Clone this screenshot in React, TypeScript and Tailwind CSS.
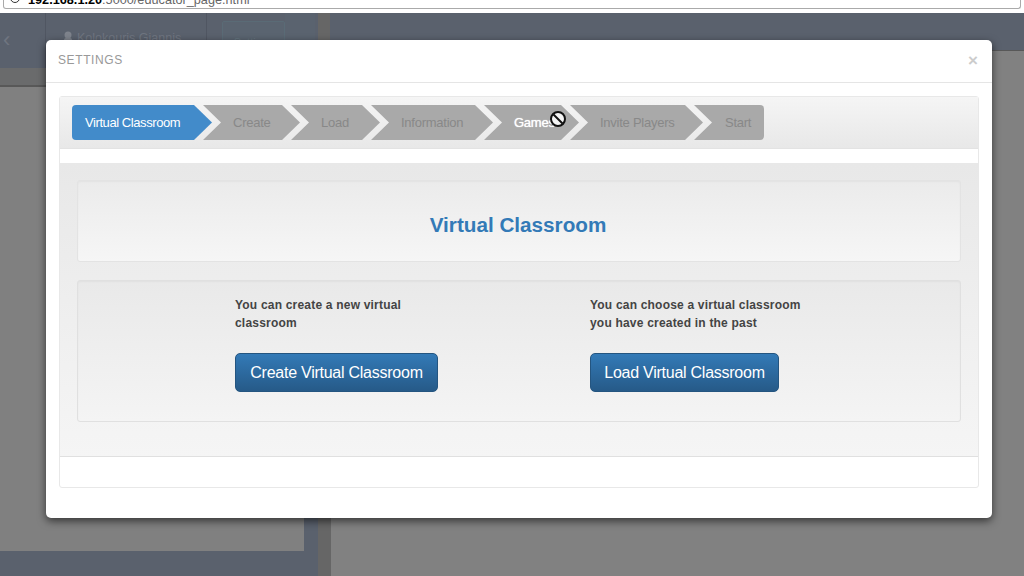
const STEP_BASE = "flex h-[35px] shrink-0 items-center text-[13px] tracking-[-0.25px]";
const MID = "[clip-path:polygon(0_0,calc(100%-18px)_0,100%_50%,calc(100%-18px)_100%,0_100%,18px_50%)]";

function Cursor() {
  return (
    <svg className="absolute left-[549px] top-[110px] z-20" width="18" height="18" viewBox="0 0 18 18">
      <circle cx="9" cy="9" r="7" fill="#f4f4f4" stroke="#111" strokeWidth="2" />
      <path d="M4.5 4.5 13.5 13.5" stroke="#111" strokeWidth="2" />
    </svg>
  );
}

export default function App() {
  const steps = [
    { label: "Create", w: "w-[97px]", t: "text-[#888888] pl-[30px]" },
    { label: "Load", w: "w-[89px]", t: "text-[#888888] pl-[30px]" },
    { label: "Information", w: "w-[122px]", t: "text-[#888888] pl-[30px]" },
    { label: "Games", w: "w-[95px]", t: "text-white pl-[30px] [text-shadow:0_0_1px_#ffffff]" },
    { label: "Invite Players", w: "w-[133px]", t: "text-[#888888] pl-[30px]" },
  ];
  return (
    <div className="relative flex h-[576px] w-[1024px] flex-col overflow-hidden bg-[#808080] font-['Liberation_Sans',Arial,sans-serif]">
      {/* browser address bar */}
      <div className="h-[13px] shrink-0 bg-white">
        <div className="mx-[3px] flex h-[9px] items-start overflow-hidden rounded-b-[3px] border-x border-b border-[#aaaaaa]">
          <div className="ml-[6px] mt-[-7px] h-[10px] w-[10px] shrink-0 rounded-full border border-[#333]" />
          <div className="ml-[8px] whitespace-nowrap text-[12.7px] leading-[0px] text-[#666]">
            <span className="font-bold text-black">192.168.1.20</span>:5000/educator_page.html
          </div>
        </div>
      </div>
      {/* app top bar */}
      <div className="flex h-[37px] shrink-0 bg-[#5a616d] text-[#6f7580]">
        <div className="w-[46px] shrink-0 border-r border-[#505662] pl-[3px] pt-[14px] text-[22px] leading-[26px]">‹</div>
        <div className="flex w-[161px] shrink-0 items-start border-r border-[#505662] pl-[17px] pt-[18px]">
          <svg width="10" height="14" viewBox="0 0 10 14" className="shrink-0"><circle cx="5" cy="4" r="3.5" fill="#7e838c" /><rect x="1" y="7" width="8" height="7" rx="2" fill="#7e838c" /></svg>
          <span className="ml-[4px] whitespace-nowrap text-[12.5px] leading-[14px]">Kolokouris Giannis</span>
        </div>
        <div className="ml-[15px] mt-[8px] h-[29px] w-[63px] shrink-0 rounded-[2px] border border-[#5a6b76] bg-[#5a6470] pt-[14px] text-center text-[11px] leading-[12px] text-[#64757f]">Settings</div>
        <div className="h-full w-[30px] shrink-0 bg-[#5a636f]" />
        <div className="ml-[3px] h-full w-[12px] shrink-0 bg-[#666666]" />
      </div>
      <div className="flex min-h-0 flex-1">
        <div className="flex w-[318px] shrink-0 flex-col bg-[#5a616d]">
          <div className="h-[18px] w-[46px] shrink-0 border-r border-[#505662]" />
          <div className="h-[19px] shrink-0 border-b-2 border-[#585858] bg-[#6a6b6c]" />
          <div className="h-[464px] w-[304px] shrink-0 bg-[#808080]" />
        </div>
        <div className="w-[13px] shrink-0 bg-[#666666]" />
        <div className="flex-1 border-t border-[#585858] bg-[#818181]" />
      </div>

      {/* dialog */}
      <div className="absolute left-[46px] top-[40px] z-10 flex h-[478px] w-[946px] flex-col rounded-[5px] bg-white shadow-[0_3px_9px_rgba(0,0,0,0.6)]">
        <div className="flex h-[43px] shrink-0 items-center justify-between border-b border-[#e5e5e5] pb-[2px] pl-[12px] pr-[14px]">
          <span className="text-[12px] tracking-[0.6px] text-[#999999]">SETTINGS</span>
          <span className="text-[17px] font-bold leading-none text-[#cccccc]">×</span>
        </div>
        <div className="mx-[13px] mt-[13px] flex h-[392px] flex-col rounded-[3px] border border-[#e8e8e8]">
          <div className="flex h-[52px] shrink-0 items-center border-b border-[#e3e3e3] bg-gradient-to-b from-[#f5f5f5] to-[#e8e8e8] pl-[12px]">
            <div className={`${STEP_BASE} w-[140px] rounded-l-[4px] bg-[#428bca] pl-[13px] text-white [clip-path:polygon(0_0,calc(100%-18px)_0,100%_50%,calc(100%-18px)_100%,0_100%)]`}>
              <span className="tracking-[-0.42px]">Virtual Classroom</span>
            </div>
            {steps.map((s) => (
              <div key={s.label} className={`${STEP_BASE} ${MID} ${s.w} ${s.t} -ml-[9px] bg-[#a9a9a9]`}>
                <span className="whitespace-nowrap">{s.label}</span>
              </div>
            ))}
            <div className={`${STEP_BASE} -ml-[9px] w-[70px] rounded-r-[4px] bg-[#a9a9a9] pl-[31px] text-[#888888] [clip-path:polygon(0_0,100%_0,100%_100%,0_100%,18px_50%)]`}>
              Start
            </div>
          </div>
          <div className="h-[14px] shrink-0" />
          <div className="flex h-[294px] shrink-0 flex-col gap-[18px] border-b border-[#e0e0e0] bg-gradient-to-b from-[#e8e8e8] to-[#f5f5f5] px-[17px] pt-[17px]">
            <div className="flex h-[82px] shrink-0 items-center justify-center rounded-[3px] border border-[#e3e3e3] bg-gradient-to-b from-[#ebebeb] to-[#f6f6f6] shadow-[inset_0_1px_2px_rgba(0,0,0,0.04)]">
              <h1 className="pr-[2px] pt-[8px] text-[20.7px] font-bold text-[#337ab7]">Virtual Classroom</h1>
            </div>
            <div className="flex h-[142px] shrink-0 rounded-[3px] border border-[#e0e0e0] bg-gradient-to-b from-[#e9e9e9] to-[#f4f4f4] pt-[16px] shadow-[inset_0_1px_2px_rgba(0,0,0,0.04)]">
              <div className="ml-[157px] w-[203px]">
                <p className="h-[56px] text-[12px] font-bold leading-[17.5px] tracking-[0.2px] text-[#444]">You can create a new virtual<br />classroom</p>
                <button className="h-[39px] w-[203px] rounded-[5px] border border-[#245580] bg-gradient-to-b from-[#337ab7] to-[#265a88] text-[16px] tracking-[-0.25px] text-white">Create Virtual Classroom</button>
              </div>
              <div className="ml-[152px] w-[220px]">
                <p className="h-[56px] text-[12px] font-bold leading-[17.5px] tracking-[0.2px] text-[#444]">You can choose a virtual classroom<br />you have created in the past</p>
                <button className="h-[39px] w-[189px] rounded-[5px] border border-[#245580] bg-gradient-to-b from-[#337ab7] to-[#265a88] text-[16px] tracking-[-0.25px] text-white">Load Virtual Classroom</button>
              </div>
            </div>
          </div>
        </div>
      </div>
      <Cursor />
    </div>
  );
}
